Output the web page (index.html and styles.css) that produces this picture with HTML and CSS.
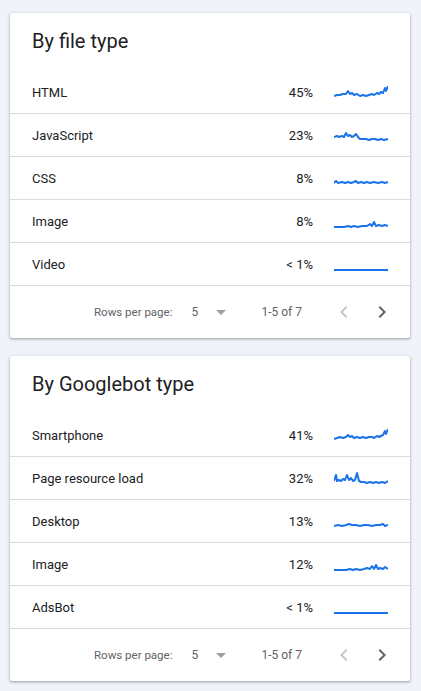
FILE: index.html
```html
<!DOCTYPE html>
<html>
<head>
<meta charset="utf-8">
<title>Crawl stats</title>
<link rel="stylesheet" href="styles.css">
</head>
<body>
  <div class="card">
    <div class="card_title">By file type</div>
    <div class="row">
      <span class="label">HTML</span><span class="pct">45%</span>
      <svg class="spark" viewBox="0 0 54 16"><polyline points="0,12 3,11 6,11 9,10 12,10 14,7 16,10 18,9 20,11 23,10 26,12 29,11 32,12 35,11 38,10 40,11 43,9 45,10 47,8 49,9 51,4 52,7 54,2"/></svg>
    </div>
    <div class="row">
      <span class="label">JavaScript</span><span class="pct">23%</span>
      <svg class="spark" viewBox="0 0 54 16"><polyline points="0,10 3,9 5,10 8,9 10,10 12,6 14,9 16,8 18,10 20,9 22,7 24,10 26,12 29,12 32,12 35,13 38,12 41,12 44,13 47,12 50,13 54,12"/></svg>
    </div>
    <div class="row">
      <span class="label">CSS</span><span class="pct">8%</span>
      <svg class="spark" viewBox="0 0 54 16"><polyline points="0,13 2,11 4,13 8,12 11,13 14,12 17,13 20,12 22,11 24,13 27,12 30,13 33,12 36,13 40,12 44,13 48,12 51,13 54,12"/></svg>
    </div>
    <div class="row">
      <span class="label">Image</span><span class="pct">8%</span>
      <svg class="spark" viewBox="0 0 54 16"><polyline points="0,14 10,14 14,13 17,14 20,13 24,14 28,13 33,13 36,11 38,13 40,9 42,13 45,12 48,13 51,12 54,13"/></svg>
    </div>
    <div class="row">
      <span class="label">Video</span><span class="pct">&lt; 1%</span>
      <svg class="spark" viewBox="0 0 54 16"><polyline points="0,14 54,14"/></svg>
    </div>
    <div class="pager">
      <span class="rows_label">Rows per page:</span>
      <span class="rows_num">5</span>
      <svg class="icon drop" viewBox="0 0 24 24"><path d="M7 10l5 5 5-5z"/></svg>
      <span class="range">1-5 of 7</span>
      <svg class="icon prev" viewBox="0 0 24 24"><path d="M15.41 7.41L14 6l-6 6 6 6 1.41-1.41L10.83 12z"/></svg>
      <svg class="icon next" viewBox="0 0 24 24"><path d="M10 6L8.59 7.41 13.17 12l-4.58 4.59L10 18l6-6z"/></svg>
    </div>
  </div>

  <div class="card">
    <div class="card_title">By Googlebot type</div>
    <div class="row">
      <span class="label">Smartphone</span><span class="pct">41%</span>
      <svg class="spark" viewBox="0 0 54 16"><polyline points="0,12 3,11 6,10 9,11 12,10 14,8 16,10 18,9 20,11 23,10 26,11 29,10 32,11 35,10 38,10 40,11 43,9 45,10 47,9 49,8 51,4 52,7 54,2"/></svg>
    </div>
    <div class="row">
      <span class="label">Page resource load</span><span class="pct">32%</span>
      <svg class="spark" viewBox="0 0 54 16"><polyline points="0,11 2,5 3,11 5,10 7,11 9,9 11,10 13,5 15,10 17,8 19,11 21,10 23,3 25,11 27,12 30,12 33,13 36,12 39,13 42,12 45,13 48,12 51,13 54,11"/></svg>
    </div>
    <div class="row">
      <span class="label">Desktop</span><span class="pct">13%</span>
      <svg class="spark" viewBox="0 0 54 16"><polyline points="0,13 4,12 8,13 12,12 15,11 18,12 22,12 26,13 30,12 34,12 38,13 42,12 46,12 49,11 51,13 54,12"/></svg>
    </div>
    <div class="row">
      <span class="label">Image</span><span class="pct">12%</span>
      <svg class="spark" viewBox="0 0 54 16"><polyline points="0,14 12,14 16,13 19,14 22,13 26,14 30,13 33,12 36,13 38,10 40,13 42,9 44,13 46,12 49,13 51,11 54,13"/></svg>
    </div>
    <div class="row">
      <span class="label">AdsBot</span><span class="pct">&lt; 1%</span>
      <svg class="spark" viewBox="0 0 54 16"><polyline points="0,14 54,14"/></svg>
    </div>
    <div class="pager">
      <span class="rows_label">Rows per page:</span>
      <span class="rows_num">5</span>
      <svg class="icon drop" viewBox="0 0 24 24"><path d="M7 10l5 5 5-5z"/></svg>
      <span class="range">1-5 of 7</span>
      <svg class="icon prev" viewBox="0 0 24 24"><path d="M15.41 7.41L14 6l-6 6 6 6 1.41-1.41L10.83 12z"/></svg>
      <svg class="icon next" viewBox="0 0 24 24"><path d="M10 6L8.59 7.41 13.17 12l-4.58 4.59L10 18l6-6z"/></svg>
    </div>
  </div>
</body>
</html>
```

FILE: styles.css
```css
body {
    margin: 0;
    padding: 13px 11px 0 10px;
    background: #f0f3fa;
    font-family: Roboto, "Liberation Sans", sans-serif;
    color: #202124;
}
.card {
    background: #fff;
    border-radius: 2px;
    box-shadow: 0 1px 2px rgba(60, 64, 67, 0.3), 0 1px 3px 1px rgba(60, 64, 67, 0.15);
    margin-bottom: 18px;
}
.card_title {
    font-size: 20px;
    line-height: 28px;
    padding: 14px 22px 16px 22px;
}
.row {
    display: flex;
    align-items: center;
    height: 42px;
    padding: 0 22px;
    border-bottom: 1px solid #dadce0;
    font-size: 13px;
}
.label {
    flex: 1;
}
.pct {
    text-align: right;
}
.spark {
    width: 54px;
    height: 16px;
    margin-left: 21px;
}
.spark polyline {
    fill: none;
    stroke: #1a73e8;
    stroke-width: 2;
    stroke-linejoin: round;
}
.pager {
    display: flex;
    align-items: center;
    justify-content: flex-end;
    height: 52px;
    padding-right: 16px;
    font-size: 12px;
    color: #5f6368;
}
.rows_label {
    font-size: 11.5px;
}
.rows_num {
    margin-left: 19px;
    width: 10px;
}
.icon {
    width: 24px;
    height: 24px;
}
.drop {
    margin-left: 8px;
    fill: #9aa0a6;
}
.range {
    margin-left: 28px;
}
.prev {
    margin-left: 30px;
    fill: #c4c7cc;
}
.next {
    margin-left: 14px;
    fill: #5f6368;
}
```
